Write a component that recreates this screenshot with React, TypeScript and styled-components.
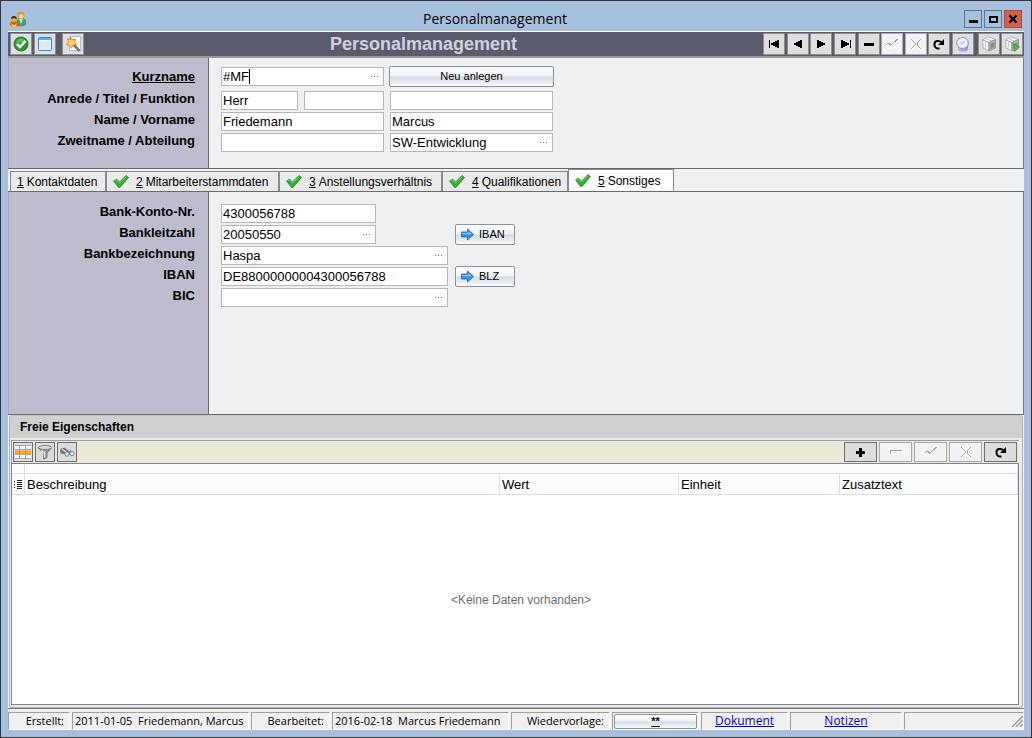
import React from "react";
import styled, { createGlobalStyle, css } from "styled-components";

const GlobalStyle = createGlobalStyle`
  *, *::before, *::after { box-sizing: border-box; }
  body {
    margin: 0;
    font-family: "Liberation Sans", Arial, sans-serif;
    font-size: 13px;
    line-height: 16px;
    color: #000;
  }
  button, input { font: inherit; color: inherit; }
  svg { display: block; flex: none; }
`;

const segoe = `"Open Sans", "Noto Sans", sans-serif`;

const Window = styled.div`
  display: flex;
  flex-direction: column;
  min-height: 100vh;
  padding: 0 7px 7px;
  border: 1px solid #33363c;
  background: #a7c0dd;
`;

const TitleBar = styled.header`
  display: flex;
  align-items: center;
  height: 30px;
  padding: 6px 2px 0;
`;

const WindowTitle = styled.h1`
  flex: 1;
  margin: 0;
  font: 400 14px/20px ${segoe};
  text-align: center;
`;

const WindowControls = styled.div`
  display: flex;
  gap: 2px;
`;

const WindowButton = styled.button<{ $close?: boolean }>`
  display: grid;
  place-items: center;
  width: 18px;
  height: 18px;
  padding: 0;
  border: 1px solid ${(p) => (p.$close ? "#b5493a" : "#5d7291")};
  background: ${(p) => (p.$close ? "#cc6450" : "#a7c0dd")};
`;

const Client = styled.main`
  display: flex;
  flex: 1;
  flex-direction: column;
  border-top: 1px solid #fff;
  background: #eff0f2;
`;

const Toolbar = styled.div`
  display: flex;
  align-items: center;
  height: 26px;
  padding: 0 1px 0 2px;
  border-bottom: 2px solid #9a9a9a;
  background: #5a5c6c;
`;

const ToolGroup = styled.div<{ $gap?: number; $width?: number }>`
  display: flex;
  justify-content: ${(p) => (p.$width ? "space-between" : "flex-start")};
  gap: ${(p) => p.$gap ?? 0}px;
  ${(p) => p.$width && `width: ${p.$width}px;`}
`;

const ToolButton = styled.button`
  display: grid;
  place-items: center;
  width: 22px;
  height: 22px;
  padding: 0;
  border: 1px solid #8e8e8e;
  background: #dfdfdf;

  &:disabled {
    border-color: #aab0ba;
    background: #f3f3f3;
  }
`;

const ToolbarTitle = styled.h2`
  flex: 1;
  margin: 0;
  font-size: 18px;
  line-height: 22px;
  text-align: center;
  color: #d0d1dd;
`;

const FormPanel = styled.section<{ $lower?: boolean }>`
  display: flex;
  height: ${(p) => (p.$lower ? 223 : 111)}px;
  border-right: 1px solid #7b7b7b;
  border-bottom: 1px solid #6b6b6b;
`;

const LabelColumn = styled.div<{ $lower?: boolean }>`
  display: flex;
  flex-direction: column;
  width: 201px;
  padding: ${(p) => (p.$lower ? 9 : 8)}px 13px 0 0;
  border-right: 1px solid #6b6b6b;
  border-left: 1px solid #a9a9b8;
  background: #bdbdce;
`;

const Label = styled.label<{ $key?: boolean }>`
  height: 21px;
  font-weight: 700;
  line-height: 21px;
  text-align: right;
  ${(p) => p.$key && "text-decoration: underline; margin-bottom: 1px;"}
`;

const FieldColumn = styled.div<{ $lower?: boolean }>`
  display: flex;
  flex-direction: column;
  gap: 2px;
  padding: ${(p) => (p.$lower ? 12 : 9)}px 0 0 12px;
`;

const FieldRow = styled.div<{ $lead?: boolean }>`
  display: flex;
  align-items: center;
  gap: 6px;
  height: 19px;
  ${(p) => p.$lead && "margin-bottom: 3px;"}
`;

const FieldBox = styled.div<{ $width: number }>`
  position: relative;
  display: flex;
  align-items: center;
  width: ${(p) => p.$width}px;
  height: 19px;
  border: 1px solid #b4b8bf;
  background: #fff;
`;

const TextInput = styled.input`
  flex: 1;
  min-width: 0;
  height: 17px;
  padding: 0 1px;
  border: 0;
  outline: 0;
  background: transparent;
`;

const LookupButton = styled.button`
  width: 17px;
  height: 17px;
  padding: 0 4px;
  border: 0;
  background: transparent;
`;

const Caret = styled.span`
  position: absolute;
  top: 1px;
  left: 27px;
  width: 1px;
  height: 15px;
  background: #000;
`;

const glossy = css`
  border: 1px solid #8c929d;
  border-radius: 2px;
  background: linear-gradient(#fdfdfe, #eef2f5 48%, #d3dce4 52%, #f8fafb);
`;

const PushButton = styled.button<{ $width: number; $icon?: boolean }>`
  ${glossy}
  display: flex;
  align-items: center;
  justify-content: ${(p) => (p.$icon ? "flex-start" : "center")};
  gap: 5px;
  width: ${(p) => p.$width}px;
  height: 21px;
  margin-left: ${(p) => (p.$icon ? 1 : -1)}px;
  padding: 0 5px 1px;
  font-size: 11px;
  line-height: 16px;
`;

const PushSlot = styled.div<{ $indent: number }>`
  padding-left: ${(p) => p.$indent}px;
`;

const TabBar = styled.nav`
  display: flex;
  align-items: flex-end;
  height: 23px;
  padding-left: 2px;
  border-bottom: 1px solid #6b6b6b;
`;

const Tab = styled.button<{ $width: number; $active?: boolean }>`
  display: flex;
  align-items: center;
  gap: 7px;
  width: ${(p) => p.$width}px;
  height: ${(p) => (p.$active ? 22 : 20)}px;
  padding: 0 0 0 6px;
  border: 1px solid #868a96;
  border-bottom: 0;
  background: ${(p) => (p.$active ? "#fff" : "#eaeaea")};
  font-size: 12px;
  white-space: nowrap;
  u { margin-right: 3px; }
`;

const Group = styled.section`
  display: flex;
  flex: 1;
  flex-direction: column;
  margin: 0 1px;
  border: 1px solid #b4b4b4;
  border-top-color: #c4c4c4;
  border-radius: 3px;
  background: #ebebeb;
`;

const GroupTitle = styled.h3`
  height: 22px;
  margin: 0 0 2px;
  padding-left: 10px;
  background: #d0d0d0;
  font-size: 12px;
  line-height: 22px;
`;

const GridToolbar = styled.div`
  display: flex;
  justify-content: space-between;
  height: 23px;
  margin: 0 3px 0 1px;
  padding: 1px 2px 1px 1px;
  border-top: 1px solid #9d9d9d;
  border-left: 1px solid #9d9d9d;
  background: #ece9d8;
`;

const GridButton = styled.button<{ $wide?: boolean }>`
  display: grid;
  place-items: center;
  width: ${(p) => (p.$wide ? 33 : 20)}px;
  height: 20px;
  padding: 0;
  border: 1px solid #6f6f6f;
  background: #dcdcdc;

  &:disabled {
    border-color: #a5a8ad;
    background: #f3f3f3;
  }
`;

const DataGrid = styled.div`
  display: flex;
  flex: 1;
  flex-direction: column;
  margin: 0 3px 2px 1px;
  border: 1px solid #7f838f;
  background: #fff;
`;

const Table = styled.table`
  width: 100%;
  border-collapse: separate;
  border-spacing: 0;
  table-layout: fixed;
  background: #fcfcfc;
`;

const BandCell = styled.td`
  height: 10px;
  padding: 0;
  border-right: 1px solid #dfdfdf;
  border-bottom: 1px solid #dfdfdf;
`;

const HeadCell = styled.th`
  height: 21px;
  padding: 1px 3px 0 2px;
  border-right: 1px solid #dfdfdf;
  border-bottom: 1px solid #dfdfdf;
  font-weight: 400;
  text-align: left;
`;

const EmptyNote = styled.p`
  display: grid;
  flex: 1;
  place-items: center;
  margin: 0;
  padding-left: 12px;
  font-size: 12px;
  color: #6d6d6d;
`;

const StatusBar = styled.footer`
  display: flex;
  gap: 2px;
  height: 22px;
  padding-top: 3px;
  border-top: 1px solid #7b7b7b;
  background: #f0f0f0;
  font-family: ${segoe};
  font-size: 11px;
`;

const StatusCell = styled.div<{ $width?: number; $align?: string; $pad?: number }>`
  display: flex;
  flex: ${(p) => (p.$width ? `none` : 1)};
  align-items: center;
  justify-content: ${(p) => p.$align ?? "flex-start"};
  ${(p) => p.$width && `width: ${p.$width}px;`}
  padding: 0 ${(p) => p.$pad ?? 0}px;
  border: 1px solid #fff;
  border-top-color: #a0a0a0;
  border-left-color: #a0a0a0;
  white-space: pre;
`;

const StatusLink = styled.a`
  font-size: 12px;
  color: #0000e0;
`;

const StatusButton = styled.button`
  ${glossy}
  width: 84px;
  height: 15px;
  padding: 0;
  font: 700 11px/12px "Liberation Sans", Arial, sans-serif;
  text-decoration: underline;
`;

/* ---- icons ---- */

const Svg = ({ w = 16, h = 16, crisp, children }: { w?: number; h?: number; crisp?: boolean; children: React.ReactNode }) => (
  <svg width={w} height={h} viewBox={`0 0 ${w} ${h}`} fill="none" shapeRendering={crisp ? "crispEdges" : undefined} aria-hidden="true">
    {children}
  </svg>
);

const PeopleIcon = () => (
  <Svg>
    <path d="M7 15V10c0-2 1-3 3.500-3S16 8 16 10v4c-2 1.500-6 1.500-9 1Z" fill="#3fa36c" />
    <path d="M9 8l2 5 2-5Z" fill="#bfeacb" />
    <circle cx="11" cy="4.300" r="3.600" fill="#e0961f" />
    <circle cx="11.200" cy="5.300" r="2.300" fill="#fbd9a0" />
    <path d="M0 14c0-3 1-4 4-4s5 1 5 4c-2 2-7 2-9 0Z" fill="#d4551c" />
    <path d="M1 12l3 2 3-2-1 4H2Z" fill="#f5c328" />
    <circle cx="4" cy="8.500" r="2.800" fill="#e9a63d" />
    <path d="M1 8c0-4 6-4 6 0L4 7Z" fill="#45260e" />
  </Svg>
);

const OkIcon = () => (
  <Svg>
    <circle cx="8" cy="8" r="7" fill="#2a9a32" stroke="#177021" />
    <path d="M2.500 6.500C4 1.500 12 1.500 13.500 6.500Z" fill="#5dc15f" />
    <path d="M4 8l3 3 5.500-6" stroke="#fff" strokeWidth="2.500" />
  </Svg>
);

const FormIcon = () => (
  <Svg>
    <rect x="1.500" y="1.500" width="13" height="13" rx="1" fill="#e0e9f8" stroke="#2690ea" />
    <path d="M2 3h12" stroke="#4fb0ff" strokeWidth="2" />
    <path d="M2 4.500h12" stroke="#fff" />
  </Svg>
);

const WizardIcon = () => (
  <Svg>
    <path d="M4.500.5h11v14h-11Z" fill="#f7f9ff" stroke="#b3bcd0" />
    <path d="M8 8l6.500 7" stroke="#4c5363" strokeWidth="2.500" />
    <path d="M8 8l6.500 7" stroke="#a4abbd" strokeWidth=".8" />
    <path d="M5.500 1l1.700 2.800 3.300-.8-1 3.200 2 2.600-3.500.2-1.500 3.200-1.800-3-3.500-.5 2.300-2.500-1-3.500 3 1.200Z" fill="#ffd475" stroke="#e48a18" />
  </Svg>
);

const PrevIcon = ({ bar }: { bar?: boolean }) => (
  <Svg crisp>
    {bar && <path d="M3 4h1v8H3Z" fill="#000" />}
    <path d="M12 4h1v8h-1l-7-3.500v-1Z" fill="#000" transform={bar ? undefined : "translate(-1 0)"} />
  </Svg>
);

const NextIcon = ({ bar }: { bar?: boolean }) => (
  <Svg crisp>
    {bar && <path d="M13 4h1v8h-1Z" fill="#000" />}
    <path d="M5 4h-1v8h1l7-3.500v-1Z" fill="#000" />
  </Svg>
);

const MinusIcon = () => (
  <Svg crisp><path d="M3 7h10v3H3Z" fill="#000" /></Svg>
);
const PlusIcon = () => (
  <Svg crisp><path d="M3 7h3V4h3v3h3v3h-3v3H6v-3H3Z" fill="#000" /></Svg>
);
const HollowMinusIcon = () => (
  <Svg crisp>
    <path d="M3 10.500h11.500V6" stroke="#fff" />
    <path d="M2.500 10V6.500H14" stroke="#a2a2a2" />
  </Svg>
);
const FaintCheckIcon = () => (
  <Svg crisp>
    <path d="M2 10l3 3 9-9" stroke="#fff" />
    <path d="M1.500 9.500l2-2h2l1 2 7-6.500" stroke="#a2a2a2" />
  </Svg>
);
const FaintCrossIcon = () => (
  <Svg crisp>
    <path d="M4 3l4 4 5-4M4 14l4-5 5 5" stroke="#fff" />
    <path d="M3 3l4 4v2l-4 4M13 3L9 7v2l4 4" stroke="#a2a2a2" />
  </Svg>
);
const RefreshIcon = () => (
  <Svg>
    <path d="M8.500 12.500C5 13 3 10.500 3.500 7.500S8 4 11 6.500" stroke="#000" strokeWidth="2" />
    <path d="M13 3v6H7Z" fill="#000" />
  </Svg>
);
const ClockIcon = () => (
  <Svg>
    <ellipse cx="8" cy="13.500" rx="5" ry="2" fill="#a7acdc" />
    <path d="M11 3l3 3-1 6-3 3Z" fill="#8f96d0" />
    <circle cx="7.500" cy="7" r="5.700" fill="#f0f2ff" stroke="#9da3d8" strokeWidth="1.200" />
    <path d="M7.500 7.500L9.500 5" stroke="#7077b0" />
    <circle cx="6.500" cy="7.500" r="2" fill="#c6ddfa" />
  </Svg>
);
const CubeIcon = ({ run }: { run?: boolean }) => (
  <Svg>
    <path d="M1.500 4L7 1l7.500 2.500L8 6.500Z" fill="#fff" stroke="#a6a6a6" strokeWidth=".8" />
    <path d="M1.500 4L8 6.500V15L2 12Z" fill="#f1f1f1" stroke="#a6a6a6" strokeWidth=".8" />
    <path d="M8 6.500l6.500-3V12L8 15Z" fill="#b4b4b4" stroke="#8c8c8c" strokeWidth=".8" />
    <path d="M9.500 8l4-2v5l-4 2Z" fill="#8b8b8b" />
    <path d="M4.500 2.800L11 5" stroke="#a9cdd0" />
    <path d="M4.500 6v5.500" stroke="#d2d2d2" />
    {run && <path d="M9.500 8l6 3-5 4.500Z" fill="#45c73b" stroke="#269127" strokeWidth=".6" />}
  </Svg>
);

const CheckIcon = () => (
  <Svg>
    <path d="M.5 7l3-2 3 3L13 1.500 15.500 3.500 7 13.500H5.500Z" fill="#2fae2c" stroke="#218025" strokeWidth=".7" />
    <path d="M2 7l1.500-1 3 3L13 3" stroke="#75d769" />
  </Svg>
);

const ArrowIcon = () => (
  <Svg w={13} h={13}>
    <path d="M.5 4h6V1L12.500 6.500 6.500 12V9h-6Z" fill="#3f95e6" stroke="#1b5cae" strokeWidth=".8" />
    <path d="M1 5h6.500V3.500L10.500 6H1Z" fill="#8dcaff" />
  </Svg>
);

const TableIcon = () => (
  <Svg crisp>
    <path d="M0 1h16v14H0Z" fill="#a3a8b5" />
    <path d="M0 2h4v3H0ZM5 2h5v3H5ZM11 2h5v3h-5ZM0 11h4v3H0ZM5 11h5v3H5ZM11 11h5v3h-5Z" fill="#f4f6fc" />
    <path d="M0 6h16v4H0Z" fill="#fba32b" />
    <path d="M0 6h16v1H0Z" fill="#ffc05c" />
    <path d="M4.500 6v4M10.500 6v4" stroke="#e0870e" />
  </Svg>
);
const FunnelIcon = () => (
  <Svg>
    <path d="M1.500 4l5 5v6l3.500-1.500V9l4.500-5Z" fill="#9a9a9a" stroke="#686868" strokeWidth=".8" />
    <ellipse cx="8" cy="3.500" rx="6.500" ry="2" fill="#dcdcdc" stroke="#666" strokeWidth=".8" />
    <path d="M4.500 6.500l3 2.500v4.500" stroke="#f5f5f5" strokeWidth="1.300" />
  </Svg>
);
const BinocularsIcon = () => (
  <Svg>
    <path d="M1 7c0-3 4-4 6-3l6 3-2 4-4-1-3 0C2 10 1 9 1 7Z" fill="#777" />
    <path d="M3 5l4 3M7 4l4 3" stroke="#d8d8d8" strokeWidth="1.500" />
    <circle cx="8" cy="10" r="2.200" fill="#cfe6ff" stroke="#6d7886" strokeWidth=".8" />
    <circle cx="13" cy="9.500" r="2.200" fill="#cfe6ff" stroke="#6d7886" strokeWidth=".8" />
  </Svg>
);
const RowsIcon = () => (
  <Svg w={8} h={12} crisp>
    <path d="M2.500 1.500h5M2.500 3.500h5M2.500 5.500h5M2.500 7.500h5M2.500 9.500h5M0 2.500h1M0 5.500h1M0 8.500h1" stroke="#222" />
  </Svg>
);
const DotsIcon = () => (
  <Svg w={9} h={3} crisp><path d="M1 1h1v1H1ZM4 1h1v1H4ZM7 1h1v1H7Z" fill="#777" /></Svg>
);
const GripIcon = () => (
  <Svg w={12} h={12}>
    <path d="M1 12L12 1M5 12l7-7M9 12l3-3" stroke="#999" strokeWidth="1.400" />
  </Svg>
);

/* ---- form parts ---- */

type FieldProps = { id: string; width: number; value?: string; label?: string; lookup?: boolean; caret?: boolean };

const Field = ({ id, width, value = "", label, lookup, caret }: FieldProps) => (
  <FieldBox $width={width}>
    <TextInput id={id} aria-label={label} defaultValue={value} />
    {caret && <Caret />}
    {lookup && <LookupButton aria-label="Auswählen"><DotsIcon /></LookupButton>}
  </FieldBox>
);

const tabs = [
  { text: "Kontaktdaten", width: 96 },
  { text: "Mitarbeiterstammdaten", width: 173, checked: true },
  { text: "Anstellungsverhältnis", width: 163, checked: true },
  { text: "Qualifikationen", width: 126, checked: true },
  { text: "Sonstiges", width: 106, checked: true, active: true },
];

export default function App() {
  return (
    <>
      <GlobalStyle />
      <Window>
        <TitleBar>
          <PeopleIcon />
          <WindowTitle>Personalmanagement</WindowTitle>
          <WindowControls>
            <WindowButton aria-label="Minimieren"><Svg w={10} h={10} crisp><path d="M1 6h9v3H1Z" fill="#000" /></Svg></WindowButton>
            <WindowButton aria-label="Maximieren"><Svg w={10} h={10} crisp><path d="M2 2.500h7v5H2Z" stroke="#000" strokeWidth="2" /></Svg></WindowButton>
            <WindowButton $close aria-label="Schließen"><Svg w={10} h={10}><path d="M1.500 1.500l7 7M8.500 1.500l-7 7" stroke="#000" strokeWidth="2.200" /></Svg></WindowButton>
          </WindowControls>
        </TitleBar>

        <Client>
          <Toolbar>
            <ToolGroup $gap={6}>
              <ToolGroup $gap={2}>
                <ToolButton aria-label="OK"><OkIcon /></ToolButton>
                <ToolButton aria-label="Formular"><FormIcon /></ToolButton>
              </ToolGroup>
              <ToolButton aria-label="Assistent"><WizardIcon /></ToolButton>
            </ToolGroup>
            <ToolbarTitle>Personalmanagement</ToolbarTitle>
            <ToolGroup $gap={4}>
              <ToolGroup $width={211}>
                <ToolButton aria-label="Erster"><PrevIcon bar /></ToolButton>
                <ToolButton aria-label="Zurück"><PrevIcon /></ToolButton>
                <ToolButton aria-label="Weiter"><NextIcon /></ToolButton>
                <ToolButton aria-label="Letzter"><NextIcon bar /></ToolButton>
                <ToolButton aria-label="Löschen"><MinusIcon /></ToolButton>
                <ToolButton aria-label="Speichern" disabled><FaintCheckIcon /></ToolButton>
                <ToolButton aria-label="Verwerfen" disabled><FaintCrossIcon /></ToolButton>
                <ToolButton aria-label="Aktualisieren"><RefreshIcon /></ToolButton>
                <ToolButton aria-label="Verlauf"><ClockIcon /></ToolButton>
              </ToolGroup>
              <ToolGroup $gap={1}>
                <ToolButton aria-label="Paket"><CubeIcon /></ToolButton>
                <ToolButton aria-label="Paket ausführen"><CubeIcon run /></ToolButton>
              </ToolGroup>
            </ToolGroup>
          </Toolbar>

          <FormPanel>
            <LabelColumn>
              <Label htmlFor="kurzname" $key>Kurzname</Label>
              <Label htmlFor="anrede">Anrede / Titel / Funktion</Label>
              <Label htmlFor="name">Name / Vorname</Label>
              <Label htmlFor="zweitname">Zweitname / Abteilung</Label>
            </LabelColumn>
            <FieldColumn>
              <FieldRow $lead>
                <Field id="kurzname" width={163} value="#MF" lookup caret />
                <PushButton $width={165}>Neu anlegen</PushButton>
              </FieldRow>
              <FieldRow>
                <Field id="anrede" width={77} value="Herr" />
                <Field id="titel" width={80} label="Titel" />
                <Field id="funktion" width={163} label="Funktion" />
              </FieldRow>
              <FieldRow>
                <Field id="name" width={163} value="Friedemann" />
                <Field id="vorname" width={163} value="Marcus" label="Vorname" />
              </FieldRow>
              <FieldRow>
                <Field id="zweitname" width={163} />
                <Field id="abteilung" width={163} value="SW-Entwicklung" label="Abteilung" lookup />
              </FieldRow>
            </FieldColumn>
          </FormPanel>

          <TabBar>
            {tabs.map((t, i) => (
              <Tab key={t.text} $width={t.width} $active={t.active}>
                {t.checked && <CheckIcon />}
                <span><u>{i + 1}</u>{t.text}</span>
              </Tab>
            ))}
          </TabBar>

          <FormPanel $lower>
            <LabelColumn $lower>
              <Label htmlFor="konto">Bank-Konto-Nr.</Label>
              <Label htmlFor="blz">Bankleitzahl</Label>
              <Label htmlFor="bank">Bankbezeichnung</Label>
              <Label htmlFor="iban">IBAN</Label>
              <Label htmlFor="bic">BIC</Label>
            </LabelColumn>
            <FieldColumn $lower>
              <FieldRow>
                <Field id="konto" width={155} value="4300056788" />
              </FieldRow>
              <FieldRow>
                <Field id="blz" width={155} value="20050550" lookup />
                <PushSlot $indent={72}>
                  <PushButton $width={60} $icon><ArrowIcon />IBAN</PushButton>
                </PushSlot>
              </FieldRow>
              <FieldRow>
                <Field id="bank" width={227} value="Haspa" lookup />
              </FieldRow>
              <FieldRow>
                <Field id="iban" width={227} value="DE88000000004300056788" />
                <PushButton $width={60} $icon><ArrowIcon />BLZ</PushButton>
              </FieldRow>
              <FieldRow>
                <Field id="bic" width={227} lookup />
              </FieldRow>
            </FieldColumn>
          </FormPanel>

          <Group>
            <GroupTitle>Freie Eigenschaften</GroupTitle>
            <GridToolbar>
              <ToolGroup $gap={2}>
                <GridButton aria-label="Tabelle"><TableIcon /></GridButton>
                <GridButton aria-label="Filter"><FunnelIcon /></GridButton>
                <GridButton aria-label="Suchen"><BinocularsIcon /></GridButton>
              </ToolGroup>
              <ToolGroup $gap={2}>
                <GridButton $wide aria-label="Hinzufügen"><PlusIcon /></GridButton>
                <GridButton $wide aria-label="Entfernen" disabled><HollowMinusIcon /></GridButton>
                <GridButton $wide aria-label="Übernehmen" disabled><FaintCheckIcon /></GridButton>
                <GridButton $wide aria-label="Abbrechen" disabled><FaintCrossIcon /></GridButton>
                <GridButton $wide aria-label="Neu laden"><RefreshIcon /></GridButton>
              </ToolGroup>
            </GridToolbar>
            <DataGrid>
              <Table>
                <colgroup>
                  <col width={13} />
                  <col />
                  <col width={179} />
                  <col width={161} />
                  <col width={178} />
                </colgroup>
                <thead>
                  <tr><BandCell /><BandCell colSpan={4} /></tr>
                  <tr>
                    <HeadCell><RowsIcon /></HeadCell>
                    <HeadCell>Beschreibung</HeadCell>
                    <HeadCell>Wert</HeadCell>
                    <HeadCell>Einheit</HeadCell>
                    <HeadCell>Zusatztext</HeadCell>
                  </tr>
                </thead>
              </Table>
              <EmptyNote>&lt;Keine Daten vorhanden&gt;</EmptyNote>
            </DataGrid>
          </Group>

          <StatusBar>
            <StatusCell $width={62} $align="flex-end" $pad={5}>Erstellt:</StatusCell>
            <StatusCell $width={177} $pad={2}>2011-01-05  Friedemann, Marcus</StatusCell>
            <StatusCell $width={79} $align="flex-end" $pad={5}>Bearbeitet:</StatusCell>
            <StatusCell $width={177} $pad={2}>2016-02-18  Marcus Friedemann</StatusCell>
            <StatusCell $width={99} $align="flex-end" $pad={5}>Wiedervorlage:</StatusCell>
            <StatusCell $width={87} $pad={1}><StatusButton>**</StatusButton></StatusCell>
            <StatusCell $width={87} $align="center"><StatusLink href="#dokument">Dokument</StatusLink></StatusCell>
            <StatusCell $width={112} $align="center"><StatusLink href="#notizen">Notizen</StatusLink></StatusCell>
            <StatusCell $align="flex-end"><GripIcon /></StatusCell>
          </StatusBar>
        </Client>
      </Window>
    </>
  );
}
